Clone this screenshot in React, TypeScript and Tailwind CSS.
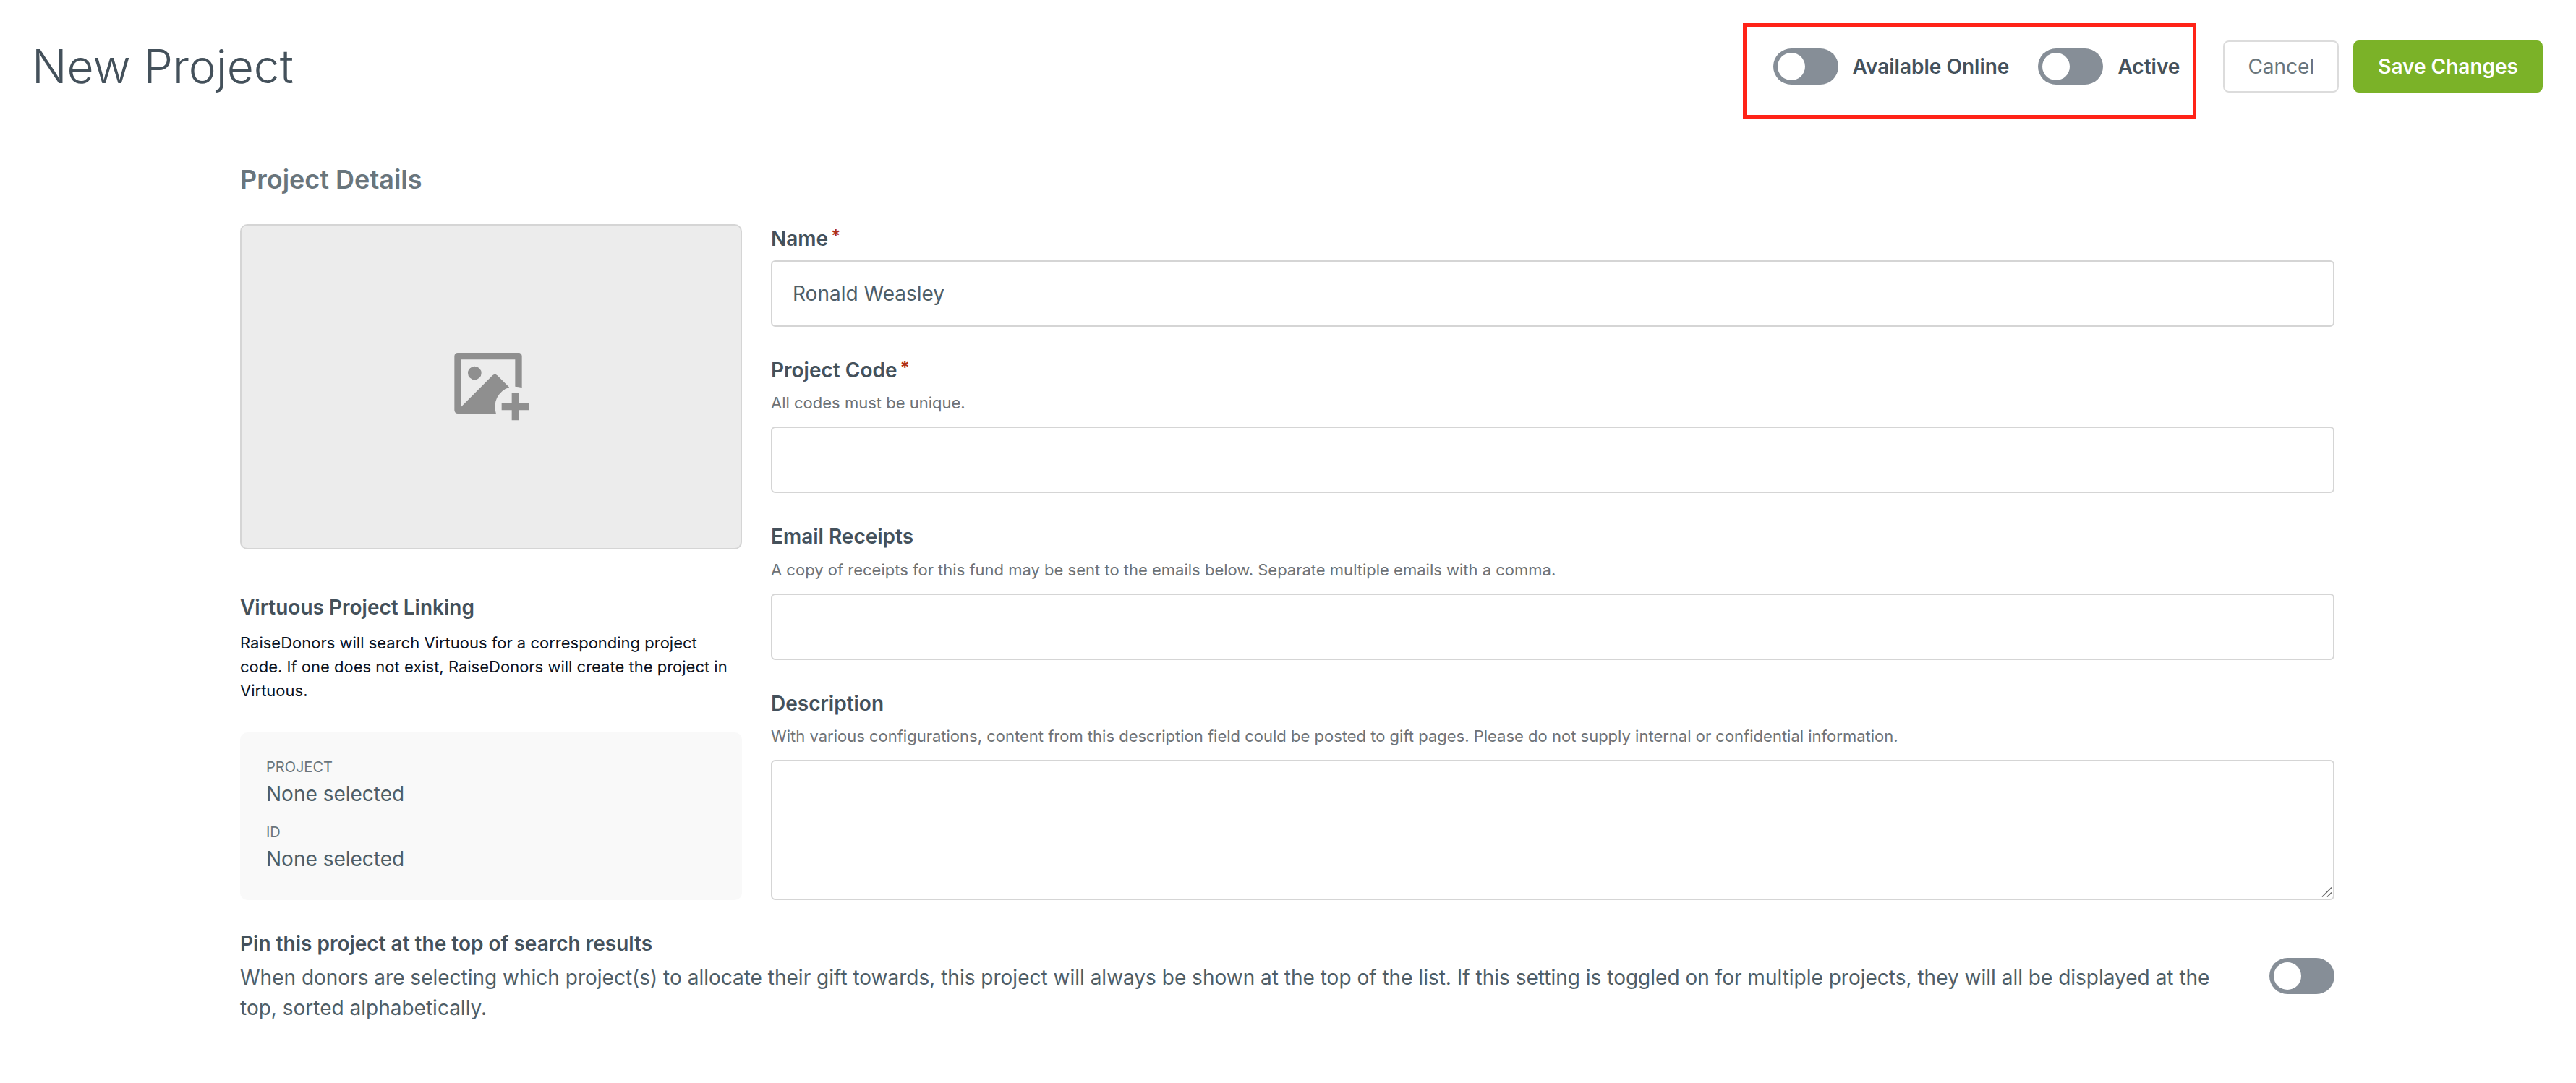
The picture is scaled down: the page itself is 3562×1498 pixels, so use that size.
import { ReactNode } from "react";

function Toggle() {
  return (
    <button type="button" role="switch" aria-checked="false" className="flex h-[50px] w-[90px] shrink-0 items-center rounded-full bg-[#868e97] px-1.5">
      <span className="size-[38px] rounded-full bg-white" />
    </button>
  );
}

function Label({ children, required, className = "" }: { children: ReactNode; required?: boolean; className?: string }) {
  return (
    <div className={`flex text-[28px] leading-[40px] font-semibold text-[#44515b] ${className}`}>
      {children}
      {required && <span className="relative -top-[3px] ml-1 text-[24px] font-bold text-[#b03018]">*</span>}
    </div>
  );
}

const helper = "text-[22px] leading-[34px] text-[#6e7276]";
const field = "block w-full rounded-[6px] border-2 border-[#d5d5d5] bg-white px-7 text-[28px] text-[#4f5e67] outline-none";

export default function App() {
  return (
    <div className="h-[1498px] w-full overflow-hidden bg-white pt-8 font-['Inter',sans-serif]">
      <header className="relative flex h-[120px] items-center pr-[46px] pl-11 text-[28px] text-[#44515b]">
        <h1 className="mb-px text-[64px] leading-[77px] font-light">New Project</h1>
        <div className="ml-auto flex items-center gap-10 font-semibold">
          <div className="flex items-center gap-5">
            <Toggle />
            <span>Available Online</span>
          </div>
          <div className="flex items-center gap-5">
            <Toggle />
            <span>Active</span>
          </div>
        </div>
        <button type="button" className="ml-[60px] h-[72px] rounded-lg border-2 border-[#dcdcdc] bg-white px-8 text-[#69757c]">Cancel</button>
        <button type="button" className="ml-5 h-[72px] rounded-lg border-2 border-[#7bb228] bg-[#7bb228] px-8 font-semibold text-white">Save Changes</button>
        <div className="pointer-events-none absolute top-0 left-[2410px] h-[132px] w-[627px] border-5 border-[#ff2317]" />
      </header>

      <main className="mt-[69px] ml-[332px] w-[2896px] text-[#44515b]">
        <h2 className="text-[36px] leading-[54px] font-semibold text-[#69757c]">Project Details</h2>

        <div className="mt-[35px] flex gap-10">
          <section className="w-[694px]">
            <div className="flex h-[450px] items-center justify-center rounded-[10px] border-2 border-[#d5d5d5] bg-[#ececec] pr-[9px] pb-[10px]">
              <svg viewBox="0 0 24 24" className="size-28 fill-[#8f8f8f]">
                <path d="M21 15v3h3v2h-3v3h-2v-3h-3v-2h3v-3h2zm.008-12c.548 0 .992.445.992.993v9.349A5.99 5.99 0 0 0 20 13V5H4l.001 14 9.292-9.293a.999.999 0 0 1 1.32-.084l.093.085 3.546 3.55a6.003 6.003 0 0 0-3.91 7.743L2.992 21A.993.993 0 0 1 2 20.007V3.993A1 1 0 0 1 2.992 3h18.016zM8 7a2 2 0 1 1 0 4 2 2 0 0 1 0-4z" />
              </svg>
            </div>
            <h3 className="mt-[59px] text-[28px] leading-[42px] font-semibold">Virtuous Project Linking</h3>
            <p className="mt-3 text-[22px] leading-[33px] text-[#0b121e]">
              RaiseDonors will search Virtuous for a corresponding project code. If one does not exist, RaiseDonors will create the project in Virtuous.
            </p>
            <dl className="mt-[41px] h-[232px] rounded-[10px] bg-[#f9f9f9] px-9 pt-[33px]">
              <dt className="text-[20px] leading-[30px] text-[#69757c]">PROJECT</dt>
              <dd className="mt-px text-[28px] leading-[42px] text-[#4f5e67]">None selected</dd>
              <dt className="mt-[17px] text-[20px] leading-[30px] text-[#69757c]">ID</dt>
              <dd className="mt-px text-[28px] leading-[42px] text-[#4f5e67]">None selected</dd>
            </dl>
          </section>

          <section className="flex-1">
            <Label required>Name</Label>
            <input className={`${field} mt-2.5 h-[92px]`} defaultValue="Ronald Weasley" />

            <Label required className="mt-10">Project Code</Label>
            <p className={`${helper} mt-2`}>All codes must be unique.</p>
            <input className={`${field} mt-4 h-[92px]`} />

            <Label className="mt-10">Email Receipts</Label>
            <p className={`${helper} mt-[9px]`}>A copy of receipts for this fund may be sent to the emails below. Separate multiple emails with a comma.</p>
            <input className={`${field} mt-4 h-[92px]`} />

            <Label className="mt-10">Description</Label>
            <p className={`${helper} mt-2`}>
              With various configurations, content from this description field could be posted to gift pages. Please do not supply internal or confidential information.
            </p>
            <div className="relative mt-4">
              <textarea className={`${field} h-[194px] resize-none`} />
              <svg viewBox="0 0 16 16" className="absolute right-[3px] bottom-[3px] size-4 fill-none stroke-[#666666] stroke-[1.5]">
                <path d="M2 14.5 15 1.5M9 14.5l6-6" />
              </svg>
            </div>
          </section>
        </div>

        <section className="mt-[39px] flex items-center gap-[60px]">
          <div className="flex-1">
            <h3 className="text-[28px] leading-[42px] font-semibold">Pin this project at the top of search results</h3>
            <p className="mt-[5px] text-[28px] leading-[42px] text-[#4f5e67]">
              When donors are selecting which project(s) to allocate their gift towards, this project will always be shown at the top of the list. If this setting is toggled on for multiple projects, they will all be displayed at the top, sorted alphabetically.
            </p>
          </div>
          <Toggle />
        </section>
      </main>
    </div>
  );
}
